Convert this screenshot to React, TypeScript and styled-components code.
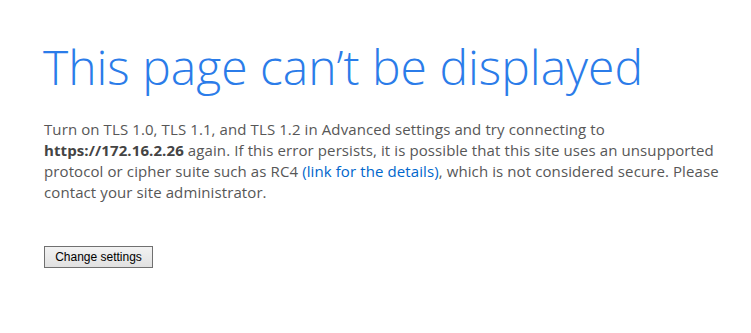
import React from "react";
import styled, { createGlobalStyle } from "styled-components";

const Global = createGlobalStyle`
  html, body { margin: 0; padding: 0; background: #ffffff; }
  body { width: 751px; height: 333px; overflow: hidden; }
`;

const Page = styled.main`
  padding: 37px 0 0 44px;
  display: flex;
  flex-direction: column;
  align-items: flex-start;
`;

const Title = styled.h1`
  margin: 0 0 0 -1px;
  font-family: "Open Sans", "Noto Sans", sans-serif;
  font-weight: 300;
  font-size: 48px;
  line-height: 60px;
  color: #2b7ce9;
  white-space: nowrap;
`;

const Body = styled.p`
  margin: 22px 0 0 0;
  font-family: "Open Sans", "Noto Sans", sans-serif;
  font-size: 15px;
  line-height: 21px;
  letter-spacing: 0.1px;
  color: #575757;
  white-space: nowrap;
`;

const Host = styled.strong`
  font-weight: 700;
  color: #444444;
`;

const Link = styled.a`
  color: #0066cc;
  text-decoration: none;
`;

const Button = styled.button`
  margin-top: 43px;
  width: 109px;
  height: 22px;
  padding: 0;
  font-family: "Liberation Sans", Arial, sans-serif;
  font-size: 12px;
  color: #000;
  background: linear-gradient(#f2f2f2, #e1e1e1);
  border: 1px solid #707070;
  border-radius: 0;
`;

export default function App() {
  return (
    <>
      <Global />
      <Page>
        <Title>This page can’t be displayed</Title>
        <Body>
          Turn on TLS 1.0, TLS 1.1, and TLS 1.2 in Advanced settings and try connecting to
          <br />
          <Host>https://172.16.2.26</Host> again. If this error persists, it is possible that this site uses an unsupported
          <br />
          protocol or cipher suite such as RC4 <Link href="#">(link for the details)</Link>, which is not considered secure. Please
          <br />
          contact your site administrator.
        </Body>
        <Button>Change settings</Button>
      </Page>
    </>
  );
}
